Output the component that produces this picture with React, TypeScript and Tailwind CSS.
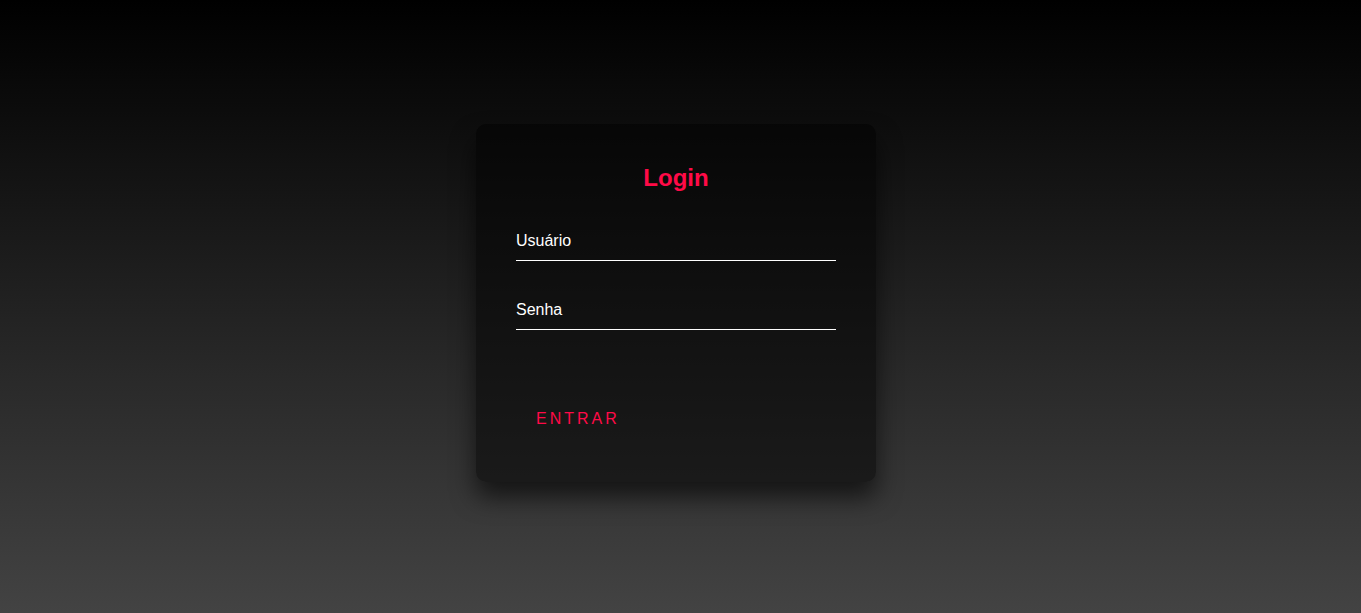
export default function App() {
  return (
    <div className="flex min-h-screen items-center justify-center bg-[linear-gradient(to_bottom,#000000,#434343)] pr-[9px] pb-[7px] font-['Liberation_Sans',Arial,sans-serif]">
      <div className="w-[400px] rounded-[10px] bg-black/50 px-10 pt-10 pb-[44px] shadow-[0_15px_25px_rgba(0,0,0,0.6)]">
        <h2 className="mb-[30px] text-center text-2xl leading-7 font-bold text-[#ff0a47]">
          Login
        </h2>
        <form onSubmit={(event) => event.preventDefault()}>
          <div className="mb-[30px]">
            <input
              type="text"
              placeholder="Usuário"
              className="w-full border-b border-white bg-transparent py-[10px] text-base leading-[18px] text-white outline-none placeholder:text-white"
            />
          </div>
          <div className="mb-[30px]">
            <input
              type="password"
              placeholder="Senha"
              className="w-full border-b border-white bg-transparent py-[10px] text-base leading-[18px] text-white outline-none placeholder:text-white"
            />
          </div>
          <button
            type="submit"
            className="mt-10 inline-block px-5 py-[10px] text-base leading-[18px] tracking-[3px] text-[#ff0a47] uppercase"
          >
            Entrar
          </button>
        </form>
      </div>
    </div>
  );
}
